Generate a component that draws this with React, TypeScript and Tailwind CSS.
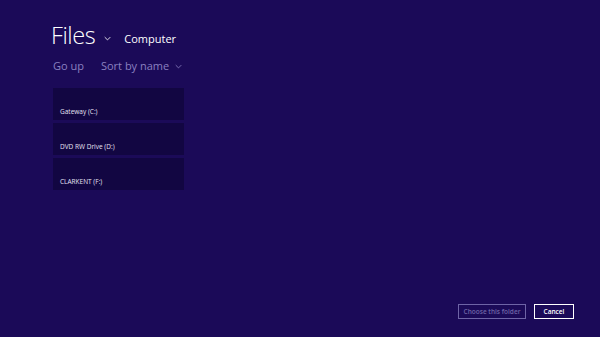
import React from "react";

const Chevron = ({ className }: { className?: string }) => (
  <svg viewBox="0 0 10 6" className={className} fill="none" stroke="currentColor" strokeWidth="1.2">
    <path d="M1 1 L5 5 L9 1" />
  </svg>
);

export default function App() {
  const drives = ["Gateway (C:)", "DVD RW Drive (D:)", "CLARKENT (F:)"];
  return (
    <div
      className="w-[600px] h-[337px] bg-[#1b0a58] flex flex-col overflow-hidden"
      style={{ fontFamily: '"Open Sans", "Noto Sans", sans-serif' }}
    >
      <div className="pl-[51px] pt-[20px] flex items-end">
        <span className="text-[23.5px] font-light text-white leading-[30px] tracking-[-0.4px]">Files</span>
        <Chevron className="w-[7px] h-[5px] text-white ml-[9px] mb-[9px]" />
        <span className="text-[11px] text-white ml-[13px] mb-[2px] leading-[18px]">Computer</span>
      </div>
      <div className="pl-[53px] pt-[7px] flex items-center text-[11px] text-[#8a80c0] leading-[18px]">
        <span>Go up</span>
        <span className="ml-[17px]">Sort by name</span>
        <Chevron className="w-[7px] h-[5px] ml-[6px] mt-[1px]" />
      </div>
      <div className="pl-[53px] pt-[13px] flex flex-col gap-[3px]">
        {drives.map((d) => (
          <div key={d} className="w-[131px] h-[32px] bg-[#120642] flex items-end px-[7px] pb-[3px]">
            <span className="text-[6.5px] text-[#e6e3f2] leading-[10px]">{d}</span>
          </div>
        ))}
      </div>
      <div className="flex-1" />
      <div className="flex justify-end gap-[8px] pr-[26px] pb-[18px]">
        <div className="w-[68px] h-[15px] border border-[#6e64a6] flex items-center justify-center text-[6.5px] font-semibold text-[#6e64a6]">
          Choose this folder
        </div>
        <div className="w-[40px] h-[15px] border border-white flex items-center justify-center text-[6.5px] font-semibold text-white">
          Cancel
        </div>
      </div>
    </div>
  );
}
